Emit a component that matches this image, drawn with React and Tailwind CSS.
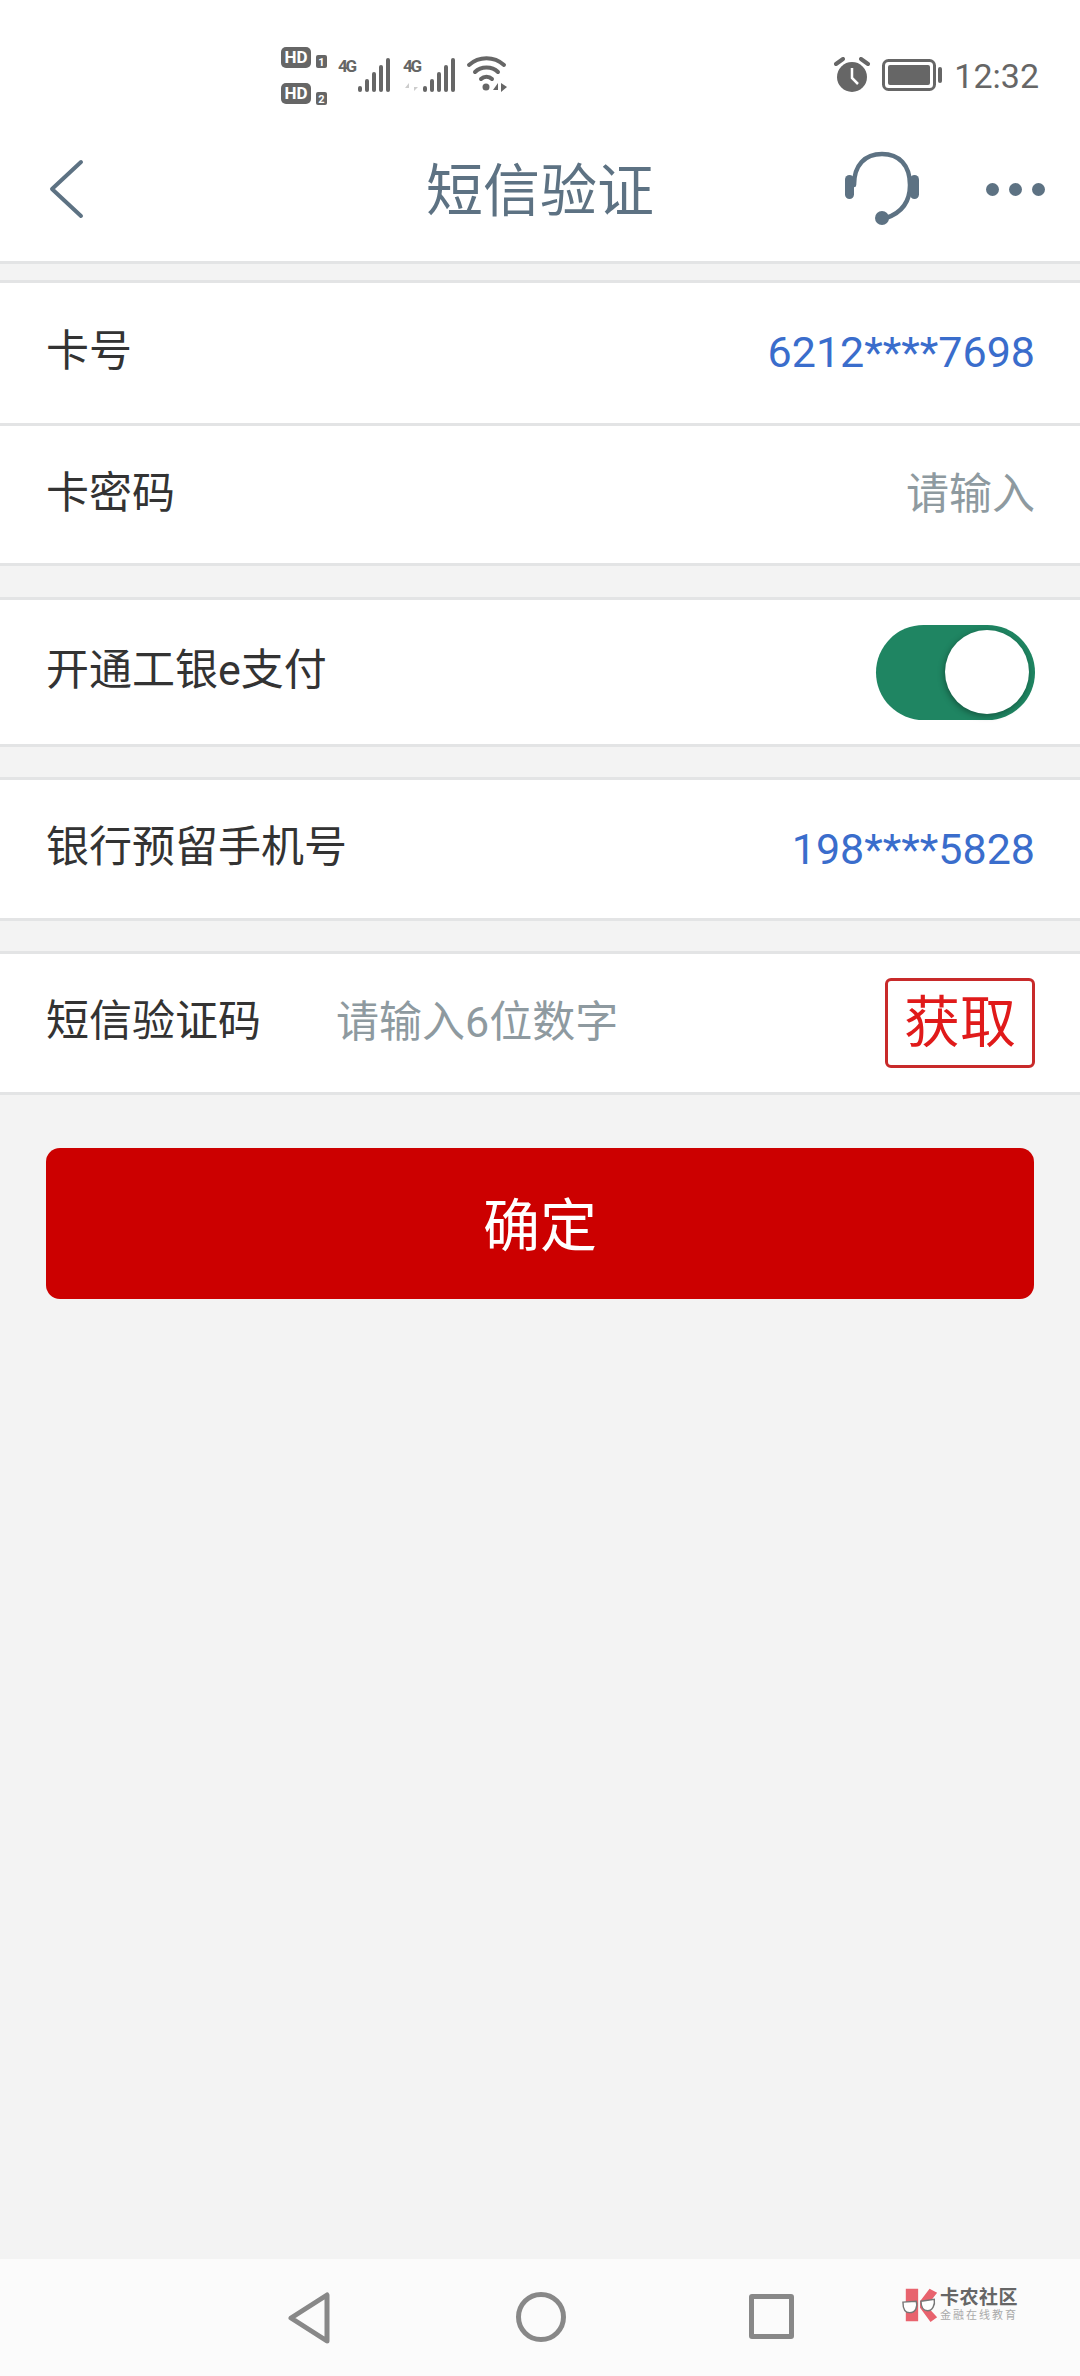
const cjk = "font-['Roboto','Noto_Sans_CJK_SC',sans-serif]";

function StatusLeft() {
  const bars = [
    [0, 6],
    [7, 13],
    [14, 20],
    [21, 27],
    [28, 34],
  ];
  return (
    <svg width="232" height="62" viewBox="278 45 232 62" fill="#666">
      <rect x="281" y="47" width="30" height="21" rx="5" />
      <text x="296" y="63" textAnchor="middle" fontSize="17" fontWeight="700" fill="#fff" fontFamily="Roboto">HD</text>
      <rect x="316" y="55" width="11" height="13" rx="2" />
      <text x="321.500" y="66" textAnchor="middle" fontSize="11" fontWeight="700" fill="#fff" fontFamily="Roboto">1</text>
      <rect x="281" y="83" width="30" height="21" rx="5" />
      <text x="296" y="99" textAnchor="middle" fontSize="17" fontWeight="700" fill="#fff" fontFamily="Roboto">HD</text>
      <rect x="316" y="92" width="11" height="13" rx="2" />
      <text x="321.500" y="103" textAnchor="middle" fontSize="11" fontWeight="700" fill="#fff" fontFamily="Roboto">2</text>

      <text x="338" y="72" fontSize="17" fontWeight="700" fontFamily="Roboto" textLength="19">4G</text>
      {bars.map(([dx, h]) => (
        <rect key={dx} x={358 + dx} y={92 - h} width="4" height={h} rx="2" />
      ))}
      <text x="403" y="72" fontSize="17" fontWeight="700" fontFamily="Roboto" textLength="19">4G</text>
      <path d="M409 92V83l-4 5h4zM414 82v9l4-4h-4z" fill="#ccc" />
      {bars.map(([dx, h]) => (
        <rect key={dx} x={423 + dx} y={92 - h} width="4" height={h} rx="2" />
      ))}

      <path d="M469 65c10-9 25-9 35 0M475 72c6-6 17-6 23 0M481 79c3-3 8-3 11 0" stroke="#666" strokeWidth="4" strokeLinecap="round" fill="none" />
      <circle cx="486" cy="87" r="3.500" />
      <path d="M498 92v-9l-5 7h5zM501 83v9l6-5z" />
    </svg>
  );
}

function StatusRight() {
  return (
    <div className="flex items-center">
      <svg width="38" height="36" viewBox="0 0 38 36" fill="#666">
        <circle cx="19" cy="20" r="15" />
        <path d="M19 11v10l6 6" stroke="#fff" strokeWidth="2.500" fill="none" />
        <path d="M3 7l7-5M35 7l-7-5" stroke="#666" strokeWidth="4" strokeLinecap="round" />
      </svg>
      <svg className="ml-[11px]" width="61" height="32" viewBox="0 0 61 32" fill="#666">
        <rect x="1.500" y="1.500" width="51" height="29" rx="5" fill="none" stroke="#666" strokeWidth="3" />
        <rect x="6" y="6" width="42" height="20" rx="2" />
        <rect x="56" y="8" width="4" height="16" rx="2" />
      </svg>
      <span className="ml-[11px] mt-[1px] font-['Roboto',sans-serif] text-[34px] leading-none text-[#666]">12:32</span>
    </div>
  );
}

function Row({ label, children, className = "" }) {
  return (
    <div className={`flex items-center bg-white border-y-[3px] border-[#e3e4e5] pl-[46px] pr-[45px] ${className}`}>
      <span className="text-[43px] leading-none text-[#333] -mt-[3px] shrink-0">{label}</span>
      {children}
    </div>
  );
}

function LogoMark() {
  return (
    <svg width="38" height="36" viewBox="0 0 40 36">
      <path d="M4 1h13v34H4zM19 14L29 1l8 4-11 14 11 12-7 5-11-15z" fill="#e8636e" />
      <path d="M1 15l14-1c2 6-1 12-7 12-5 0-7-5-7-11zM20 14l14-2c1 6-2 12-7 12s-7-5-7-10z" fill="#fff" stroke="#777" strokeWidth="1.500" />
    </svg>
  );
}

export default function App() {
  return (
    <div className={`min-h-[2376px] flex flex-col bg-[#f3f3f3] ${cjk}`}>
      <div className="bg-white">
        {/* status bar */}
        <div className="h-[122px] flex items-start justify-between pl-[278px] pr-[41px]">
          <div className="pt-[45px]"><StatusLeft /></div>
          <div className="pt-[57px]"><StatusRight /></div>
        </div>
        {/* title bar */}
        <div className="h-[139px] grid grid-cols-3 items-center px-[46px]">
          <svg className="-mt-[6px]" width="38" height="60" viewBox="0 0 38 60" fill="none" stroke="#5d7283" strokeWidth="4" strokeLinecap="round" strokeLinejoin="round">
            <path d="M35 3L6 30l29 27" />
          </svg>
          <div className="text-center text-[57px] leading-none text-[#5d7283] -mt-[1px] whitespace-nowrap">短信验证</div>
          <div className="flex items-center justify-end -mr-[11px] -mt-[4px]">
            <svg className="-mt-[3px]" width="74" height="74" viewBox="0 0 74 74" fill="none">
              <path d="M9 34C9 14 20 3 37 3s28 11 28 31c0 18-9 28-24 33" stroke="#5d7283" strokeWidth="4.500" strokeLinecap="round" />
              <rect x="0" y="24" width="9" height="24" rx="4.500" fill="#5d7283" />
              <rect x="65" y="24" width="9" height="24" rx="4.500" fill="#5d7283" />
              <circle cx="37" cy="67" r="7" fill="#5d7283" />
            </svg>
            <div className="ml-[67px] flex gap-[10px]">
              <div className="w-[13px] h-[13px] rounded-full bg-[#5d7283]" />
              <div className="w-[13px] h-[13px] rounded-full bg-[#5d7283]" />
              <div className="w-[13px] h-[13px] rounded-full bg-[#5d7283]" />
            </div>
          </div>
        </div>
      </div>

      <div className="border-t-[3px] border-[#e3e4e5] h-[19px]" />

      <Row label="卡号" className="h-[146px] justify-between">
        <span className="text-[43px] leading-none text-[#3a6dcc] -mt-[1px]">6212****7698</span>
      </Row>
      <Row label="卡密码" className="h-[140px] justify-between border-t-0">
        <span className="text-[43px] leading-none text-[#8e9aa0] -mt-[1px]">请输入</span>
      </Row>

      <Row label="开通工银e支付" className="h-[150px] justify-between mt-[31px]">
        <div className="w-[159px] h-[95px] rounded-full bg-[#1f8562] flex items-center justify-end pr-[6px]">
          <div className="w-[84px] h-[84px] rounded-full bg-white shadow-[-1px_2px_6px_rgba(0,0,0,0.35)]" />
        </div>
      </Row>

      <Row label="银行预留手机号" className="h-[144px] justify-between mt-[30px]">
        <span className="text-[43px] leading-none text-[#3a6dcc]">198****5828</span>
      </Row>

      <Row label="短信验证码" className="h-[144px] mt-[30px]">
        <span className="ml-[75px] text-[43px] leading-none text-[#8e9aa0] -mt-[1px]">请输入6位数字</span>
        <button className="ml-auto w-[150px] h-[90px] rounded-[6px] border-[3px] border-[#c82a2a] text-[56px] leading-none text-[#e01a1a] bg-white">
          获取
        </button>
      </Row>

      <button className="mt-[53px] mx-[46px] h-[151px] rounded-[14px] bg-[#cc0000] text-white text-[57px] leading-none pt-[5px]">
        确定
      </button>

      <div className="flex-1" />

      {/* navigation bar */}
      <div className="h-[117px] bg-[#fbfbfb] flex items-start pl-[287px] pt-[33px]">
        <svg width="44" height="52" viewBox="0 0 44 52" fill="none" stroke="#888" strokeWidth="5" strokeLinejoin="round">
          <path d="M40 3v46L4 26z" />
        </svg>
        <div className="ml-[185px] w-[50px] h-[50px] rounded-full border-[5px] border-[#888]" />
        <div className="ml-[183px] mt-[2px] w-[45px] h-[45px] rounded-[3px] border-[5px] border-[#888]" />
        <div className="ml-[108px] -mt-[5px] flex items-center">
          <LogoMark />
          <div className="flex flex-col">
            <span className="text-[19px] leading-[22px] font-bold text-[#666] tracking-[0.5px]">卡农社区</span>
            <span className="text-[11px] leading-[14px] text-[#aaa] tracking-[2px]">金融在线教育</span>
          </div>
        </div>
      </div>
    </div>
  );
}
